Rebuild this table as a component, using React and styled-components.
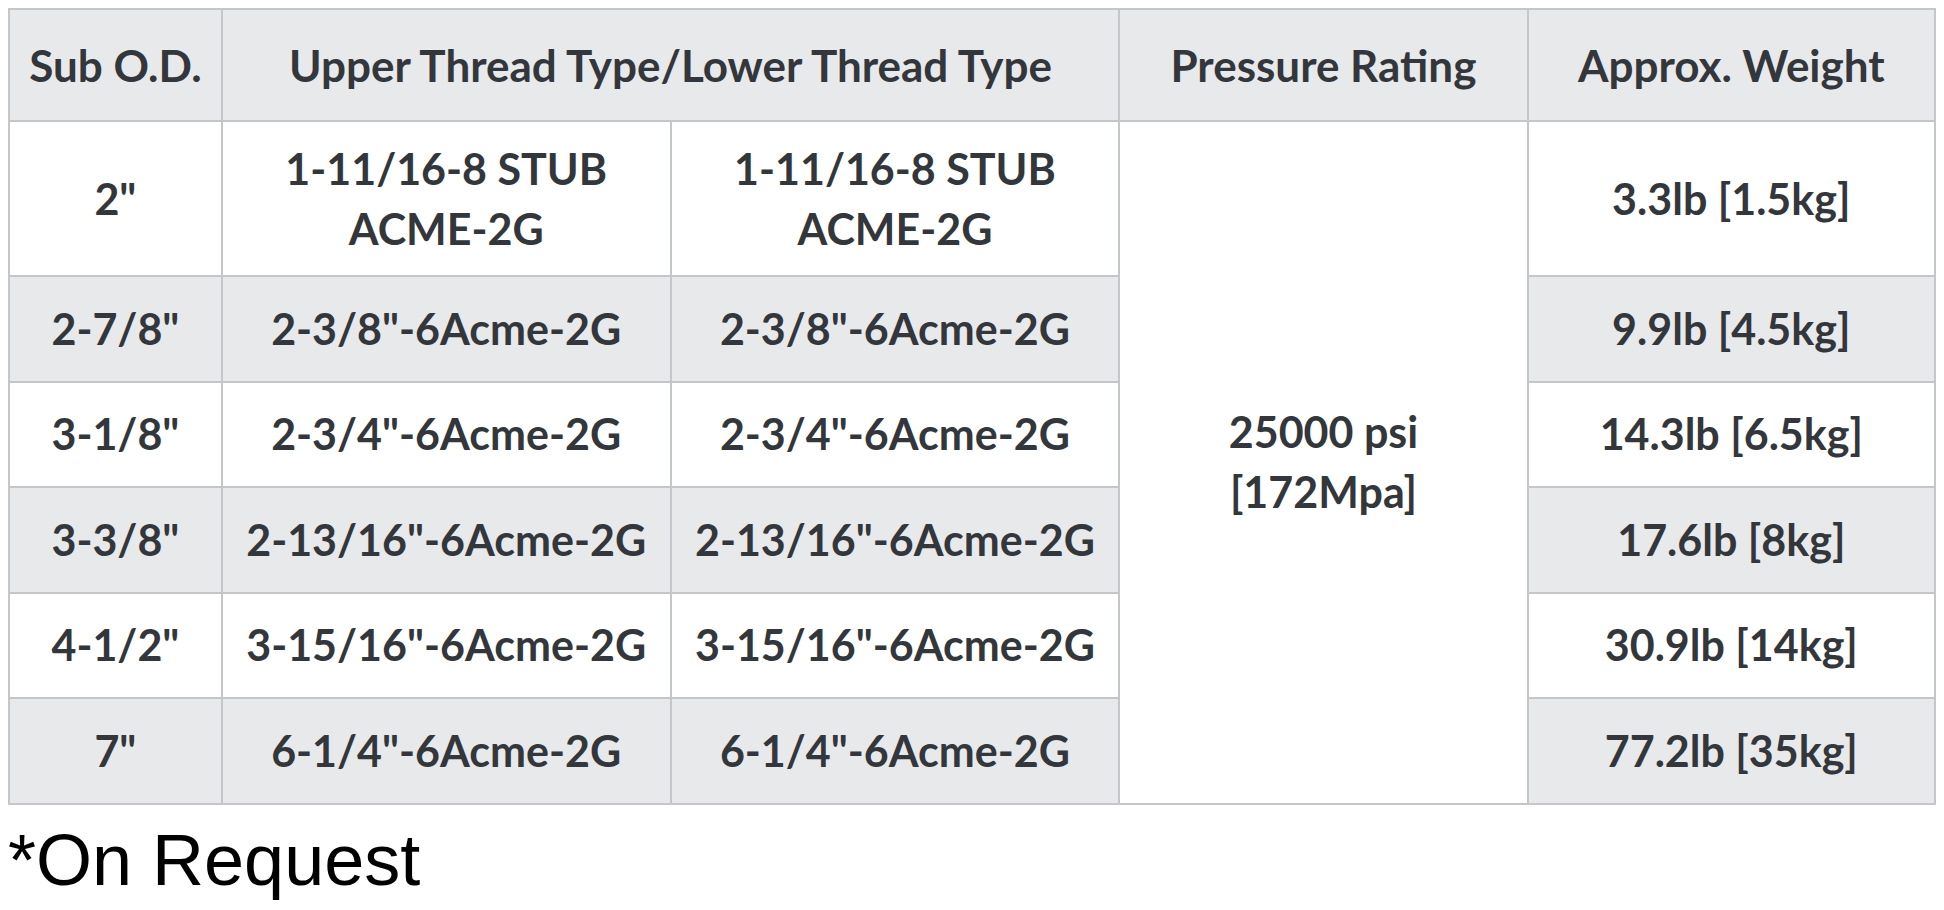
import React from "react";
import styled, { createGlobalStyle } from "styled-components";

const GlobalStyle = createGlobalStyle`
  body {
    margin: 8px;
    background: #fff;
    font-family: "Liberation Sans", Arial, sans-serif;
  }
`;

const rows = [
  { od: '2"', upper: "1-11/16-8 STUB\nACME-2G", lower: "1-11/16-8 STUB\nACME-2G", weight: "3.3lb [1.5kg]", tall: true },
  { od: '2-7/8"', upper: '2-3/8"-6Acme-2G', lower: '2-3/8"-6Acme-2G', weight: "9.9lb [4.5kg]" },
  { od: '3-1/8"', upper: '2-3/4"-6Acme-2G', lower: '2-3/4"-6Acme-2G', weight: "14.3lb [6.5kg]" },
  { od: '3-3/8"', upper: '2-13/16"-6Acme-2G', lower: '2-13/16"-6Acme-2G', weight: "17.6lb [8kg]" },
  { od: '4-1/2"', upper: '3-15/16"-6Acme-2G', lower: '3-15/16"-6Acme-2G', weight: "30.9lb [14kg]" },
  { od: '7"', upper: '6-1/4"-6Acme-2G', lower: '6-1/4"-6Acme-2G', weight: "77.2lb [35kg]" },
];

const App = () => {
  return (
    <>
      <GlobalStyle />
      <SpecTable>
        <colgroup>
          <col style={{ width: "11.05%" }} />
          <col style={{ width: "23.3%" }} />
          <col style={{ width: "23.3%" }} />
          <col style={{ width: "21.2%" }} />
          <col style={{ width: "21.15%" }} />
        </colgroup>
        <thead>
          <tr>
            <Th>Sub O.D.</Th>
            <Th colSpan={2}>Upper Thread Type/Lower Thread Type</Th>
            <Th>Pressure Rating</Th>
            <Th>Approx. Weight</Th>
          </tr>
        </thead>
        <tbody>
          {rows.map((r, i) => (
            <Row key={i} $striped={i % 2 === 1} $tall={r.tall}>
              <Td>{r.od}</Td>
              <Td>{r.upper}</Td>
              <Td>{r.lower}</Td>
              {i === 0 && (
                <Td rowSpan={rows.length} $plain>
                  25000 psi
                  <br />
                  [172Mpa]
                </Td>
              )}
              <Td>{r.weight}</Td>
            </Row>
          ))}
        </tbody>
      </SpecTable>
      <Note>*On Request</Note>
    </>
  );
};

const SpecTable = styled.table`
  width: 100%;
  table-layout: fixed;
  border-collapse: collapse;
  font-family: "Source Sans Pro", Lato, "Noto Sans", sans-serif;
  font-weight: 700;
  font-size: 43px;
  line-height: 60px;
  color: #33373b;
`;

const Th = styled.th`
  background: #e8e9eb;
  border: 2px solid #c4c6ca;
  height: 110px;
  padding: 0 8px;
  text-align: center;
  vertical-align: middle;
  font-size: 44px;
  font-weight: 700;
`;

const Row = styled.tr`
  height: ${(p) => (p.$tall ? "155px" : "105.5px")};
  background: ${(p) => (p.$striped ? "#e8e9eb" : "#ffffff")};
`;

const Td = styled.td`
  border: 2px solid #c4c6ca;
  padding: 0 8px;
  text-align: center;
  vertical-align: middle;
  white-space: pre-line;
  background: ${(p) => (p.$plain ? "#ffffff" : "inherit")};
`;

const Note = styled.div`
  margin-top: 12px;
  font-family: "Liberation Sans", Arial, sans-serif;
  font-size: 72px;
  line-height: 1.2;
  color: #000;
`;

export default App;
